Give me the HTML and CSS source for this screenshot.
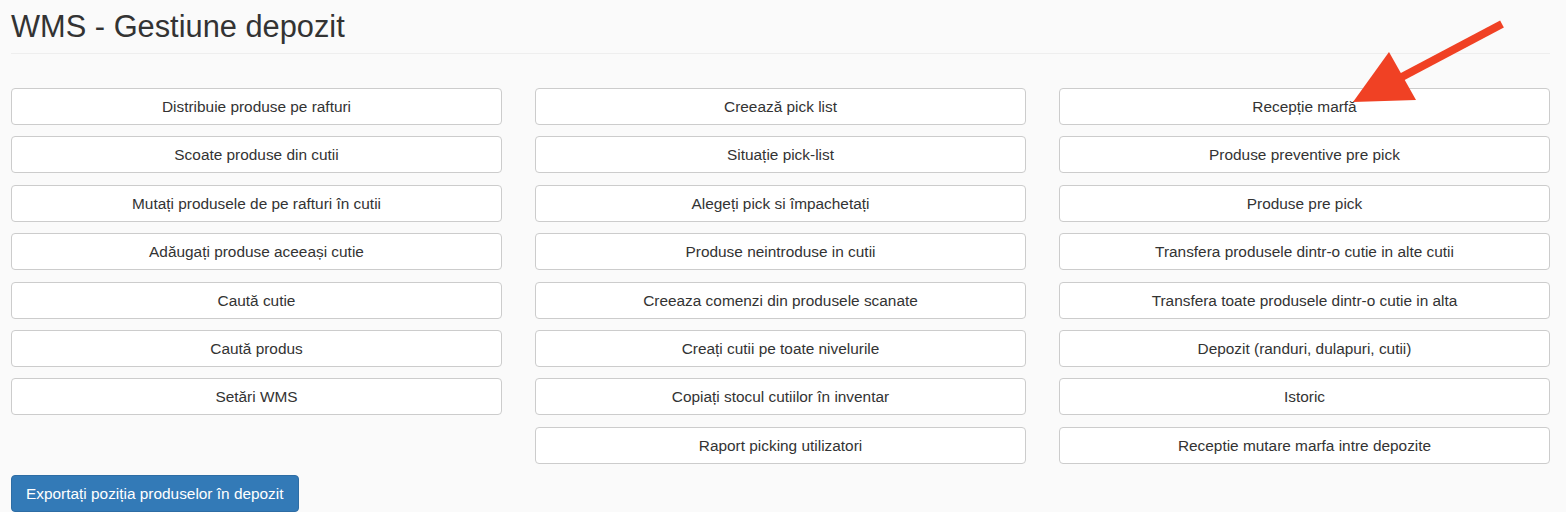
FILE: index.html
```html
<!DOCTYPE html>
<html lang="ro">
<head>
    <meta charset="UTF-8">
    <title>WMS - Gestiune depozit</title>
    <meta name="viewport" content="width=device-width, initial-scale=1.0">
    <link rel="stylesheet" href="styles.css">
</head>
<body>
<div class="page">
    <h1 class="page-title">WMS - Gestiune depozit</h1>
    <hr class="title-rule">

    <div class="menu">
        <div class="menu-col">
            <a class="btn" href="#">Distribuie produse pe rafturi</a>
            <a class="btn" href="#">Scoate produse din cutii</a>
            <a class="btn" href="#">Mutați produsele de pe rafturi în cutii</a>
            <a class="btn" href="#">Adăugați produse aceeași cutie</a>
            <a class="btn" href="#">Caută cutie</a>
            <a class="btn" href="#">Caută produs</a>
            <a class="btn" href="#">Setări WMS</a>
        </div>
        <div class="menu-col">
            <a class="btn" href="#">Creează pick list</a>
            <a class="btn" href="#">Situație pick-list</a>
            <a class="btn" href="#">Alegeți pick si împachetați</a>
            <a class="btn" href="#">Produse neintroduse in cutii</a>
            <a class="btn" href="#">Creeaza comenzi din produsele scanate</a>
            <a class="btn" href="#">Creați cutii pe toate nivelurile</a>
            <a class="btn" href="#">Copiați stocul cutiilor în inventar</a>
            <a class="btn" href="#">Raport picking utilizatori</a>
        </div>
        <div class="menu-col">
            <a class="btn" href="#">Recepție marfă</a>
            <a class="btn" href="#">Produse preventive pre pick</a>
            <a class="btn" href="#">Produse pre pick</a>
            <a class="btn" href="#">Transfera produsele dintr-o cutie in alte cutii</a>
            <a class="btn" href="#">Transfera toate produsele dintr-o cutie in alta</a>
            <a class="btn" href="#">Depozit (randuri, dulapuri, cutii)</a>
            <a class="btn" href="#">Istoric</a>
            <a class="btn" href="#">Receptie mutare marfa intre depozite</a>
        </div>
    </div>

    <a class="btn btn-primary" href="#">Exportați poziția produselor în depozit</a>

    <!-- annotation arrow -->
    <svg class="arrow" width="170" height="100" viewBox="1340 10 170 100">
        <line x1="1502" y1="24" x2="1398" y2="79" stroke="#f04124" stroke-width="8"/>
        <polygon points="1389,52 1353,102 1416,100" fill="#f04124"/>
    </svg>
</div>
</body>
</html>
```

FILE: styles.css
```css
body {
    margin: 0;
    background: #fff;
    font-family: "Liberation Sans", Arial, Helvetica, sans-serif;
    font-size: 15.4px;
    color: #333;
}
.page {
    position: relative;
    background: #fafafa;
    padding: 0 16px 0 11px;
    height: 512px;
    box-sizing: border-box;
}
.page-title {
    margin: 0;
    padding-top: 8px;
    font-size: 30.8px;
    font-weight: 500;
    line-height: 37px;
}
.title-rule {
    margin: 8px 0 34px;
    border: 0;
    border-top: 1px solid #eee;
}
.menu {
    display: grid;
    grid-template-columns: repeat(3, 1fr);
    column-gap: 33px;
    align-items: start;
}
.menu-col {
    display: flex;
    flex-direction: column;
    gap: 11.4px;
}
.btn {
    display: block;
    box-sizing: border-box;
    height: 37px;
    padding: 0 12px;
    border: 1px solid #ccc;
    border-radius: 4px;
    background: #fff;
    color: #333;
    line-height: 35px;
    text-align: center;
    text-decoration: none;
    white-space: nowrap;
}
.btn-primary {
    display: inline-block;
    margin-top: 11px;
    padding: 0 14px;
    background: #337ab7;
    border-color: #2e6da4;
    color: #fff;
}
.arrow {
    position: absolute;
    left: 1340px;
    top: 10px;
}
```
